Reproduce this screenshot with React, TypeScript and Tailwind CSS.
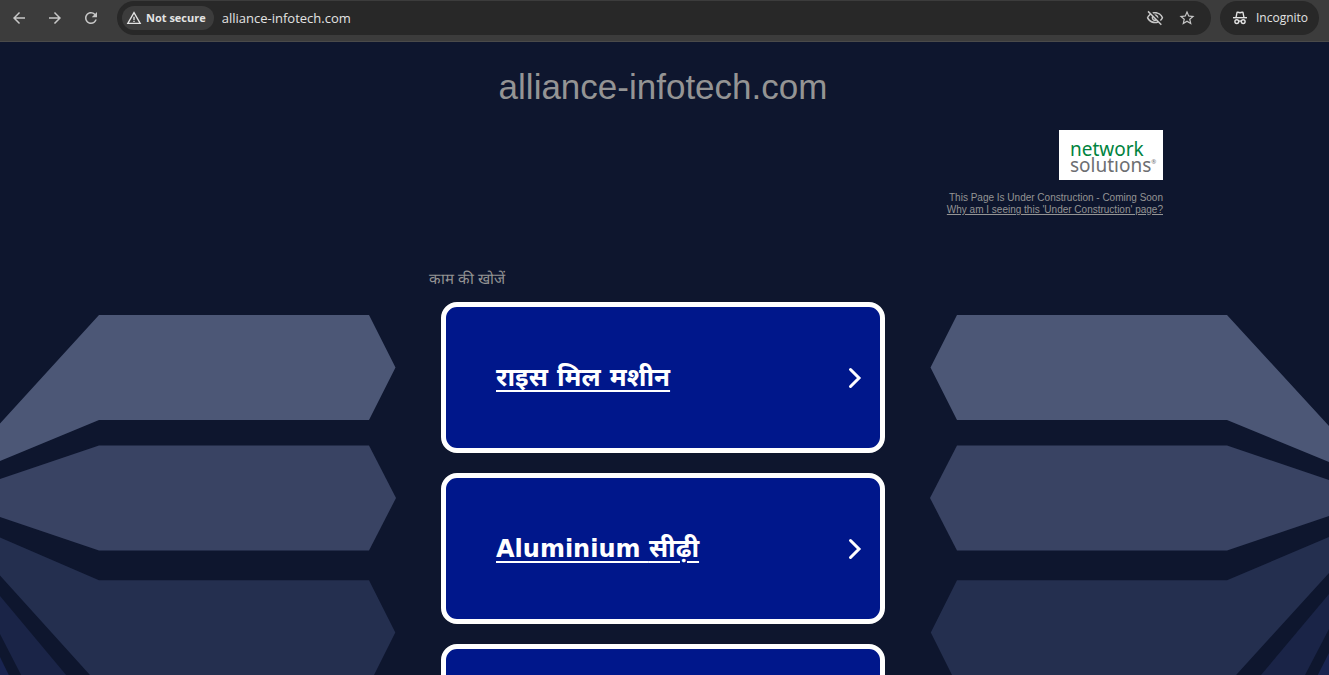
import { MdArrowBack, MdArrowForward, MdRefresh, MdStarBorder, MdOutlineVisibilityOff, MdWarningAmber } from "react-icons/md";

type Search = { id: string; latin?: string; hindi?: string };

const searches: Search[] = [
  { id: "rice-mill", hindi: "राइस मिल मशीन" },
  { id: "ladder", latin: "Aluminium", hindi: "सीढ़ी" },
  { id: "more" },
];

function IncognitoIcon() {
  return (
    <svg viewBox="0 0 16 16" className="h-4 w-4" fill="none" stroke="#e3e3e3" strokeWidth="1.4" aria-hidden="true">
      <path d="M1 7.700h14" />
      <path d="M4 7.600 5 2.700c.1-.5.500-.6 1-.4l2 .5 2-.5c.5-.2.900-.1 1 .4L12 7.600" strokeLinejoin="round" />
      <circle cx="4.800" cy="11.600" r="1.900" />
      <circle cx="11.200" cy="11.600" r="1.900" />
      <path d="M6.600 11.300c.9-.5 1.900-.5 2.800 0" />
    </svg>
  );
}

function BrowserBar() {
  return (
    <header className="flex h-[42px] shrink-0 items-start border-b border-[#4a4a4a] bg-[#3c3c3c] pt-px pr-2.5 pl-px font-['Open_Sans','Noto_Sans',sans-serif] text-[#e3e3e3]">
      <nav className="mr-2 flex h-[34px] text-[#c7c7c7]" aria-label="Browser">
        <button type="button" aria-label="Back" className="flex w-9 items-center justify-center">
          <MdArrowBack size={18} />
        </button>
        <button type="button" aria-label="Forward" className="flex w-9 items-center justify-center">
          <MdArrowForward size={18} />
        </button>
        <button type="button" aria-label="Reload" className="flex w-9 items-center justify-center">
          <MdRefresh size={18} />
        </button>
      </nav>
      <div className="flex h-[34px] min-w-0 flex-1 items-center rounded-full bg-[#282828] pr-[15px] pl-[5px]">
        <button type="button" className="flex h-6 shrink-0 items-center gap-1 rounded-full bg-[#3c3c3c] pr-2 pl-1 text-[11px] font-bold">
          <MdWarningAmber size={16} />
          Not secure
        </button>
        <input
          aria-label="Address"
          defaultValue="alliance-infotech.com"
          className="ml-2 min-w-0 flex-1 bg-transparent pt-0.5 text-[13px] outline-none"
        />
        <div className="flex gap-3.5 text-[#c7c7c7]">
          <button type="button" aria-label="Third-party cookies blocked">
            <MdOutlineVisibilityOff size={18} />
          </button>
          <button type="button" aria-label="Bookmark">
            <MdStarBorder size={18} />
          </button>
        </div>
      </div>
      <button type="button" className="ml-[9px] flex h-[34px] w-[99px] items-center gap-2 rounded-full bg-[#282828] pl-3 text-xs">
        <IncognitoIcon />
        Incognito
      </button>
    </header>
  );
}

function Wings() {
  return (
    <div aria-hidden="true" className="absolute inset-x-0 top-[273px] flex justify-between overflow-hidden">
      <svg width="399" height="385" viewBox="0 315 399 385" className="shrink-0">
        <path fill="#4c5776" d="M0 423.500 99 315H369L395.500 367.500 369 420H99L0 461Z" />
        <path fill="#394363" d="M0 479 99 445.600H369L396 498 369 550.400H99L0 517Z" />
        <path fill="#242f4f" d="M0 537.500 99 580.300H369L395.300 632.500 369 685H99L0 575.500Z" />
        <path fill="#1a2447" d="M0 596 87 700H34L0 634Z" />
        <path fill="#192450" d="M0 657 21 700H0Z" />
      </svg>
      <svg width="399" height="385" viewBox="0 315 399 385" className="shrink-0">
        <path fill="#4c5776" d="M399 426 297 315H27L.5 367.500 27 420H297L399 462Z" />
        <path fill="#394363" d="M399 480 297 445.600H27L0 498 27 550.400H297L399 516Z" />
        <path fill="#242f4f" d="M399 537 297 580.300H27L.8 632.500 27 685H297L399 573Z" />
        <path fill="#1a2447" d="M399 594 310 700H362L399 629Z" />
        <path fill="#192450" d="M399 653 375 700H399Z" />
      </svg>
    </div>
  );
}

function SearchCard({ latin, hindi }: Search) {
  return (
    <a
      href="#results"
      aria-label={hindi ? undefined : "More searches"}
      className="flex h-[151px] items-center justify-between rounded-2xl border-[5px] border-white bg-[#00178b] pr-[18px] pl-[50px] text-white"
    >
      <span className="font-['DejaVu_Sans','Noto_Sans',sans-serif] text-2xl font-bold underline decoration-2 underline-offset-4">
        {latin && `${latin} `}
        {hindi && <span className="text-[26px]">{hindi}</span>}
      </span>
      <svg width="14" height="22" viewBox="0 0 14 22" fill="none" stroke="white" strokeWidth="3" strokeLinecap="round" aria-hidden="true">
        <path d="M2.500 2.500 11 11 2.500 19.500" />
      </svg>
    </a>
  );
}

export default function App() {
  return (
    <div className="flex h-screen flex-col bg-[#0e162e]">
      <BrowserBar />
      <main className="relative min-h-0 flex-1 overflow-y-auto pr-[3px] font-['Liberation_Sans',Arial,sans-serif] text-[#949494] [scrollbar-width:none]">
        <Wings />
        <div className="relative mx-auto max-w-[1000px]">
          <h1 className="pt-6 text-center text-[35px] leading-[42px]">alliance-infotech.com</h1>
          <div className="mt-[22px] flex flex-col items-end text-[10px] leading-3">
            <div className="mb-3 flex h-[50px] w-[104px] flex-col justify-center bg-white pt-[3px] pl-[11px] font-['Noto_Sans',sans-serif] text-[19px] leading-4">
              <span className="text-[#00833e]">network</span>
              <span className="flex text-[#6d6e71]">
                solutıons<sup className="text-[6px] leading-4">®</sup>
              </span>
            </div>
            <p>This Page Is Under Construction - Coming Soon</p>
            <a href="#why" className="underline">
              Why am I seeing this 'Under Construction' page?
            </a>
          </div>
          <section className="mx-auto mt-[52px] max-w-[468px]">
            <h2 className="h-[34px] text-[15px] leading-[22px]">काम की खोजें</h2>
            <div className="flex flex-col gap-5 px-3 pb-5">
              {searches.map((search) => (
                <SearchCard key={search.id} {...search} />
              ))}
            </div>
          </section>
        </div>
      </main>
    </div>
  );
}
